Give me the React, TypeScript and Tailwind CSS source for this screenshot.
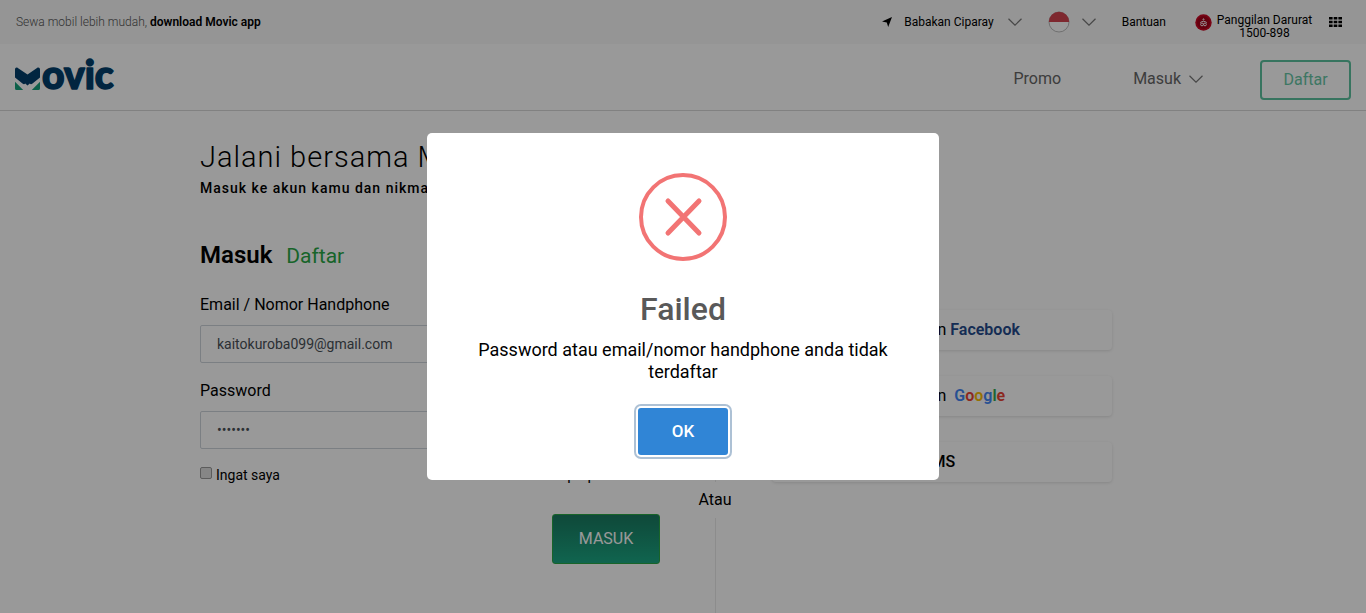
import React from "react";

function Chevron() {
  return (
    <svg viewBox="0 0 14 8" className="h-2 w-3.5" fill="none" stroke="#777" strokeWidth="1.2" aria-hidden="true">
      <path d="M0.5 0.8 7 7.2 13.5 0.8" />
    </svg>
  );
}

function Logo() {
  return (
    <svg viewBox="0 0 100 34" className="h-[34px] w-[100px] overflow-visible" role="img" aria-label="Movic">
      <path d="M0 9.5C0 7.6 1.6 7 2.8 8L12.5 14.6 22 8C23.4 7 25 7.6 25 9.5V17.5L17.5 23.5C16.5 24.5 15.5 24.5 14.8 23.6L12.5 25.5 10.2 23.6C9.5 24.5 8.5 24.5 7.5 23.5L0 17.5Z" fill="#033f6b" />
      <path d="M0 21.8 8.2 30H1.6A1.6 1.6 0 0 1 0 28.4ZM25 21.8 16.8 30H23.4A1.6 1.6 0 0 0 25 28.4Z" fill="#16a17b" />
      <text x="27" y="29" fontFamily="Lato" fontWeight="900" fontSize="39" fill="#033f6b" stroke="#033f6b" strokeWidth="1.5" strokeLinejoin="round">ovic</text>
    </svg>
  );
}

function TopBar() {
  return (
    <div className="flex h-11 items-center justify-between bg-[#f8f8f8] pl-4 pr-6 text-[12px]">
      <p className="font-light text-[#555]">
        Sewa mobil lebih mudah,{" "}
        <a href="#app" className="font-semibold text-black">download Movic app</a>
      </p>
      <div className="flex items-center text-black">
        <button className="flex items-center">
          <svg viewBox="0 0 10 10" className="mr-3 h-2.5 w-2.5" aria-hidden="true">
            <path d="M10 0 6.2 10 4.8 5.5 0 4.6Z" fill="#000" />
          </svg>
          <span className="mr-3.5">Babakan Ciparay</span>
          <Chevron />
        </button>
        <button className="ml-[26px] flex items-center gap-3" aria-label="Bahasa">
          <svg viewBox="0 0 22 22" className="h-[22px] w-[22px]" aria-hidden="true">
            <circle cx="11" cy="11" r="10" fill="#fff" stroke="#bbb" />
            <path d="M0.8 11a10.2 10.2 0 0 1 20.4 0Z" fill="#d2434f" />
          </svg>
          <Chevron />
        </button>
        <a href="#bantuan" className="ml-[26px]">Bantuan</a>
        <a href="tel:1500898" className="ml-[29px] flex items-start gap-0.5 pt-2.5">
          <svg viewBox="0 0 17 17" className="h-[17px] w-[17px]" aria-hidden="true">
            <circle cx="8.5" cy="8.5" r="8.2" fill="#c90824" />
            <circle cx="8.5" cy="8.5" r="6.5" fill="#a8001a" />
            <g fill="none" stroke="#fff" strokeWidth="0.9">
              <circle cx="8.5" cy="5.4" r="0.6" />
              <path d="M5.2 8.6c1.8-1.7 4.8-1.7 6.6 0" />
              <circle cx="7" cy="10.4" r="1.4" />
              <circle cx="10" cy="10.4" r="1.4" />
            </g>
          </svg>
          <span className="w-[101px] text-center leading-[13px]">Panggilan Darurat 1500-898</span>
        </a>
        <button className="ml-3.5" aria-label="Menu">
          <svg viewBox="0 0 13 10" className="h-2.5 w-[13px]" aria-hidden="true">
            <path d="M0 0h3.6v2.6H0zM4.7 0h3.6v2.6H4.7zM9.4 0H13v2.6H9.4zM0 3.7h3.6v2.6H0zM4.7 3.7h3.6v2.6H4.7zM9.4 3.7H13v2.6H9.4zM0 7.4h3.6V10H0zM4.7 7.4h3.6V10H4.7zM9.4 7.4H13V10H9.4z" />
          </svg>
        </button>
      </div>
    </div>
  );
}

function Header() {
  return (
    <header className="flex h-[67px] items-center justify-between border-b border-[#d8d8d8] px-[15px]">
      <a href="#home"><Logo /></a>
      <nav className="mt-1.5 flex items-center text-[16px] text-[#666]">
        <a href="#promo" className="mb-0.5 mr-[72px]">Promo</a>
        <button className="mb-0.5 mr-[57px] flex items-center gap-2">
          Masuk <Chevron />
        </button>
        <a href="#daftar" className="flex h-10 w-[91px] items-center justify-center rounded-sm border-2 border-[#5cc29f] text-[#66c6a6]">
          Daftar
        </a>
      </nav>
    </header>
  );
}

function SocialButton({ children }: { children: React.ReactNode }) {
  return (
    <button className="h-10 w-full rounded-sm pl-[78px] text-left text-[16px] text-black shadow-[0_1px_3px_rgba(0,0,0,0.12)]">
      {children}
    </button>
  );
}

function LoginPage() {
  return (
    <main className="flex grow items-stretch pl-[200px]">
      <form className="w-[460px] pt-7" onSubmit={(e) => e.preventDefault()}>
        <h1 className="whitespace-nowrap text-[29px] font-light leading-9 tracking-[1px]">Jalani bersama Movic</h1>
        <p className="whitespace-nowrap text-[14px] font-medium leading-[26px] tracking-[1px]">Masuk ke akun kamu dan nikmati layanannya</p>
        <div className="mt-9 flex items-baseline gap-3.5 leading-9">
          <h2 className="text-[24px] font-semibold">Masuk</h2>
          <a href="#daftar" className="text-[21px] text-[#28a745]">Daftar</a>
        </div>
        <label htmlFor="email" className="mt-[19px] block text-[16px] leading-6">Email / Nomor Handphone</label>
        <input id="email" type="text" defaultValue="kaitokuroba099@gmail.com" className="mt-2 block h-[38px] w-full rounded-xs border border-[#ced4da] px-4 text-[14px] text-[#495057]" />
        <label htmlFor="password" className="mt-4 block text-[16px] leading-6">Password</label>
        <input id="password" type="password" defaultValue="1234567" className="mt-2 block h-[38px] w-full rounded-xs border border-[#ced4da] px-4 text-[14px] text-[#495057]" />
        <div className="mt-3.5 flex items-center justify-between text-[14px] leading-6">
          <label className="flex items-center gap-1">
            <input type="checkbox" className="mb-1 h-3 w-3 appearance-none rounded-xs border border-[#999] bg-[#e0e0e0]" />
            Ingat saya
          </label>
          <a href="#lupa" className="text-[15px]">Lupa password?</a>
        </div>
        <button className="ml-auto mt-[27px] flex h-[50px] w-[108px] items-center justify-center rounded-[3px] border border-[#28a745] bg-linear-to-b from-[#197a61] to-[#1ba884] text-[16px] text-white">
          MASUK
        </button>
      </form>
      <div className="ml-[37px] flex w-9 flex-col items-center text-[16px]">
        <div className="mt-[60px] h-[311px] w-px bg-[#eaeaea]" />
        <span className="py-1.5 leading-6">Atau</span>
        <div className="w-px grow bg-[#eaeaea]" />
      </div>
      <div className="ml-[39px] mt-[199px] flex w-[340px] flex-col gap-[26px]">
        <SocialButton>
          Login dengan <b className="font-semibold text-[#234a8c]">Facebook</b>
        </SocialButton>
        <SocialButton>
          Login dengan{" "}
          <b className="ml-1 font-semibold">
            <span className="text-[#4285f4]">G</span>
            <span className="text-[#ea4335]">o</span>
            <span className="text-[#fbbc05]">o</span>
            <span className="text-[#4285f4]">g</span>
            <span className="text-[#34a853]">l</span>
            <span className="text-[#ea4335]">e</span>
          </b>
        </SocialButton>
        <SocialButton>
          Login via <b className="ml-1 font-medium">SMS</b>
        </SocialButton>
      </div>
    </main>
  );
}

function FailedDialog() {
  return (
    <div className="fixed inset-0 flex items-center justify-center bg-black/40">
      <div role="alertdialog" aria-labelledby="dialog-title" aria-describedby="dialog-text" className="flex w-[512px] flex-col items-center rounded-[5px] bg-white px-5 pb-[25px] pt-10">
        <svg viewBox="0 0 88 88" className="h-[88px] w-[88px]" fill="none" stroke="#f27474" aria-hidden="true">
          <circle cx="44" cy="44" r="42" strokeWidth="4" />
          <path d="M29 28 60 60M60 28 29 60" strokeWidth="5" strokeLinecap="round" />
        </svg>
        <h2 id="dialog-title" className="mt-7 text-[32px] font-medium leading-10 text-[#595959]">Failed</h2>
        <p id="dialog-text" className="mt-2.5 px-5 text-center text-[18px] leading-[22px] text-black">
          Password atau email/nomor handphone anda tidak terdaftar
        </p>
        <button className="mt-[25px] h-[47px] w-[90px] rounded-[3px] bg-[#3085d6] text-[17px] font-medium text-white shadow-[0_0_0_2px_#fff,0_0_0_4px_rgba(50,100,150,0.4)]">
          OK
        </button>
      </div>
    </div>
  );
}

export default function App() {
  return (
    <div className="flex min-h-screen flex-col bg-white font-[Roboto,sans-serif] text-black">
      <TopBar />
      <Header />
      <LoginPage />
      <FailedDialog />
    </div>
  );
}
